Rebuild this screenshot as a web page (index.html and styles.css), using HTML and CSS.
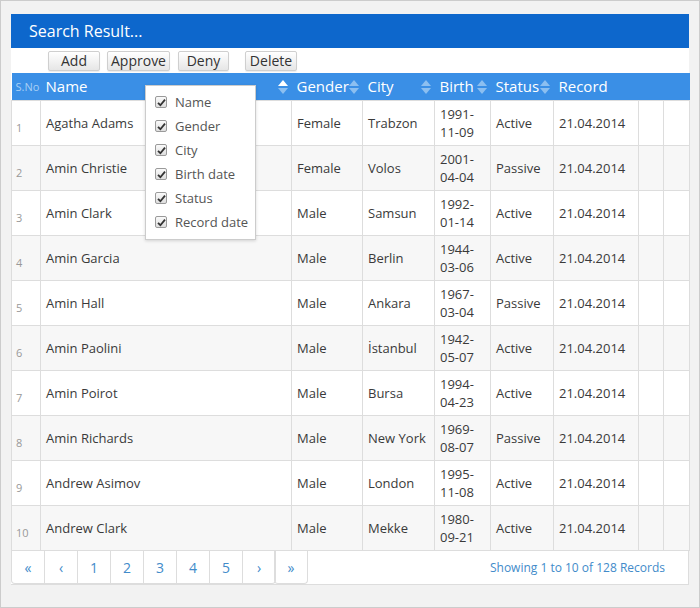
FILE: index.html
```html
<!DOCTYPE html>
<html>
<head>
<meta charset="utf-8">
<link rel="stylesheet" href="styles.css">
</head>
<body>
<div class="frame">
  <div class="panel">
    <div class="titlebar">Search Result...</div>
    <div class="toolbar">
      <button class="btn btn-add">Add</button>
      <button class="btn btn-approve">Approve</button>
      <button class="btn btn-deny">Deny</button>
      <button class="btn btn-delete">Delete</button>
    </div>
    <table class="grid">
      <colgroup>
        <col class="c-no"><col class="c-name"><col class="c-gender"><col class="c-city"><col class="c-birth"><col class="c-status"><col class="c-record"><col class="c-x1"><col class="c-x2">
      </colgroup>
      <thead>
        <tr>
          <th class="th-no"><div class="hcell">S.No</div></th>
          <th><div class="hcell"><span class="hlabel">Name</span><svg class="sort" width="10" height="14" viewBox="0 0 10 14"><polygon points="5,0 10,6 0,6" fill="#ffffff"/><polygon points="0,8 10,8 5,14" fill="#8cbff0"/></svg></div></th>
          <th><div class="hcell"><span class="hlabel">Gender</span><svg class="sort" width="10" height="14" viewBox="0 0 10 14"><polygon points="5,0 10,6 0,6" fill="#8cbff0"/><polygon points="0,8 10,8 5,14" fill="#8cbff0"/></svg></div></th>
          <th><div class="hcell"><span class="hlabel">City</span><svg class="sort" width="10" height="14" viewBox="0 0 10 14"><polygon points="5,0 10,6 0,6" fill="#8cbff0"/><polygon points="0,8 10,8 5,14" fill="#8cbff0"/></svg></div></th>
          <th><div class="hcell"><span class="hlabel">Birth date</span><svg class="sort" width="10" height="14" viewBox="0 0 10 14"><polygon points="5,0 10,6 0,6" fill="#8cbff0"/><polygon points="0,8 10,8 5,14" fill="#8cbff0"/></svg></div></th>
          <th><div class="hcell"><span class="hlabel">Status</span><svg class="sort" width="10" height="14" viewBox="0 0 10 14"><polygon points="5,0 10,6 0,6" fill="#8cbff0"/><polygon points="0,8 10,8 5,14" fill="#8cbff0"/></svg></div></th>
          <th><div class="hcell"><span class="hlabel">Record date</span></div></th>
          <th></th>
          <th></th>
        </tr>
      </thead>
      <tbody>
        <tr><td class="no">1</td><td>Agatha Adams</td><td>Female</td><td>Trabzon</td><td>1991-11-09</td><td>Active</td><td>21.04.2014</td><td></td><td></td></tr>
        <tr><td class="no">2</td><td>Amin Christie</td><td>Female</td><td>Volos</td><td>2001-04-04</td><td>Passive</td><td>21.04.2014</td><td></td><td></td></tr>
        <tr><td class="no">3</td><td>Amin Clark</td><td>Male</td><td>Samsun</td><td>1992-01-14</td><td>Active</td><td>21.04.2014</td><td></td><td></td></tr>
        <tr><td class="no">4</td><td>Amin Garcia</td><td>Male</td><td>Berlin</td><td>1944-03-06</td><td>Active</td><td>21.04.2014</td><td></td><td></td></tr>
        <tr><td class="no">5</td><td>Amin Hall</td><td>Male</td><td>Ankara</td><td>1967-03-04</td><td>Passive</td><td>21.04.2014</td><td></td><td></td></tr>
        <tr><td class="no">6</td><td>Amin Paolini</td><td>Male</td><td>İstanbul</td><td>1942-05-07</td><td>Active</td><td>21.04.2014</td><td></td><td></td></tr>
        <tr><td class="no">7</td><td>Amin Poirot</td><td>Male</td><td>Bursa</td><td>1994-04-23</td><td>Active</td><td>21.04.2014</td><td></td><td></td></tr>
        <tr><td class="no">8</td><td>Amin Richards</td><td>Male</td><td>New York</td><td>1969-08-07</td><td>Passive</td><td>21.04.2014</td><td></td><td></td></tr>
        <tr><td class="no">9</td><td>Andrew Asimov</td><td>Male</td><td>London</td><td>1995-11-08</td><td>Active</td><td>21.04.2014</td><td></td><td></td></tr>
        <tr><td class="no">10</td><td>Andrew Clark</td><td>Male</td><td>Mekke</td><td>1980-09-21</td><td>Active</td><td>21.04.2014</td><td></td><td></td></tr>
      </tbody>
    </table>
    <div class="footer">
      <div class="pager">
        <div class="pgroup">
          <span class="pitem">«</span><span class="pitem">‹</span><span class="pitem">1</span><span class="pitem">2</span><span class="pitem">3</span><span class="pitem">4</span><span class="pitem">5</span><span class="pitem">›</span>
        </div>
        <div class="pgroup">
          <span class="pitem">»</span>
        </div>
      </div>
      <div class="info">Showing 1 to 10 of 128 Records</div>
    </div>
    <div class="colmenu">
      <div class="mitem"><span class="cb"><svg width="9" height="9" viewBox="0 0 9 9"><path d="M1 4.8 L3.4 7.2 L8 1.6" fill="none" stroke="#333" stroke-width="1.8"/></svg></span>Name</div>
      <div class="mitem"><span class="cb"><svg width="9" height="9" viewBox="0 0 9 9"><path d="M1 4.8 L3.4 7.2 L8 1.6" fill="none" stroke="#333" stroke-width="1.8"/></svg></span>Gender</div>
      <div class="mitem"><span class="cb"><svg width="9" height="9" viewBox="0 0 9 9"><path d="M1 4.8 L3.4 7.2 L8 1.6" fill="none" stroke="#333" stroke-width="1.8"/></svg></span>City</div>
      <div class="mitem"><span class="cb"><svg width="9" height="9" viewBox="0 0 9 9"><path d="M1 4.8 L3.4 7.2 L8 1.6" fill="none" stroke="#333" stroke-width="1.8"/></svg></span>Birth date</div>
      <div class="mitem"><span class="cb"><svg width="9" height="9" viewBox="0 0 9 9"><path d="M1 4.8 L3.4 7.2 L8 1.6" fill="none" stroke="#333" stroke-width="1.8"/></svg></span>Status</div>
      <div class="mitem"><span class="cb"><svg width="9" height="9" viewBox="0 0 9 9"><path d="M1 4.8 L3.4 7.2 L8 1.6" fill="none" stroke="#333" stroke-width="1.8"/></svg></span>Record date</div>
    </div>
  </div>
</div>
</body>
</html>
```
FILE: styles.css
```css
* { box-sizing: border-box; }
html, body { margin: 0; padding: 0; }
body {
  font-family: "Open Sans", "Liberation Sans", sans-serif;
  color: #333;
}
.frame {
  width: 700px;
  height: 608px;
  border: 1px solid #cccccc;
  background: #f2f2f2;
  padding: 13px 10px 0 10px;
}
.panel {
  position: relative;
  width: 678px;
  background: #fff;
  border-bottom: 1px solid #dddddd;
}
.titlebar {
  height: 34px;
  background: #0d67cc;
  color: #fff;
  font-size: 16px;
  line-height: 34px;
  padding-left: 18px;
}
.toolbar {
  height: 25px;
  display: flex;
  align-items: flex-start;
  padding-top: 3px;
  padding-left: 37px;
}
.btn {
  font-family: "Open Sans", "Liberation Sans", sans-serif;
  font-size: 14px;
  color: #333;
  height: 20px;
  line-height: 18px;
  padding: 0;
  border: 1px solid #cfcfcf;
  border-radius: 2px;
  background: linear-gradient(#ffffff, #e6e6e6);
  box-shadow: 0 1px 1px rgba(0,0,0,0.08);
}
.btn-add { width: 52px; }
.btn-approve { width: 63px; margin-left: 7px; }
.btn-deny { width: 51px; margin-left: 8px; }
.btn-delete { width: 52px; margin-left: 16px; }

.grid {
  width: 678px;
  table-layout: fixed;
  border-collapse: collapse;
  font-size: 13px;
}
.c-no { width: 29px; }
.c-name { width: 251px; }
.c-gender { width: 71px; }
.c-city { width: 72px; }
.c-birth { width: 56px; }
.c-status { width: 63px; }
.c-record { width: 85px; }
.c-x1 { width: 25px; }
.c-x2 { width: 26px; }

.grid th {
  background: #3a8fe6;
  color: #fff;
  font-weight: normal;
  font-size: 15px;
  height: 27px;
  padding: 0;
  text-align: left;
  border: none;
  vertical-align: top;
}
.hcell {
  height: 27px;
  overflow: hidden;
  display: flex;
  align-items: flex-start;
  justify-content: space-between;
  padding: 2px 4px 0 5px;
  line-height: 22px;
}
.hlabel { white-space: normal; }
.th-no .hcell {
  font-size: 11px;
  color: #a9d0f5;
  padding: 3px 0 0 4px;
}
.sort { flex: none; margin-top: 5px; }

.grid td {
  border: 1px solid #dddddd;
  height: 45px;
  padding: 4px 5px;
  line-height: 18px;
  vertical-align: middle;
  color: #3a3a3a;
}
.grid tbody tr:nth-child(even) td { background: #f7f7f7; }
.grid td.no {
  font-size: 11px;
  color: #999;
  padding: 10px 0 0 4px;
}

.footer {
  height: 33px;
  display: flex;
  justify-content: space-between;
  align-items: center;
  border-right: 1px solid #dddddd;
}
.pager { display: flex; height: 33px; }
.pgroup { display: flex; }
.pgroup + .pgroup { margin-left: -1px; }
.pitem {
  width: 34px;
  height: 33px;
  display: flex;
  align-items: center;
  justify-content: center;
  font-size: 14px;
  color: #428bca;
  border: 1px solid #dddddd;
  border-top: none;
  margin-left: -1px;
}
.pgroup:first-child .pitem:first-child { margin-left: 0; }
.pitem:first-child { border-bottom-left-radius: 4px; }
.pitem:last-child { border-bottom-right-radius: 4px; }
.info {
  font-size: 12px;
  color: #428bca;
  padding-right: 23px;
}
.colmenu {
  position: absolute;
  left: 134px;
  top: 71px;
  width: 111px;
  height: 155px;
  background: #fff;
  border: 1px solid #cccccc;
  box-shadow: 0 1px 3px rgba(0,0,0,0.15);
  padding: 4px 0 0 9px;
}
.mitem {
  height: 24px;
  display: flex;
  align-items: center;
  font-size: 13px;
  color: #555;
}
.cb {
  width: 12px;
  height: 12px;
  border: 1px solid #9a9a9a;
  border-radius: 2px;
  background: linear-gradient(#fafafa, #dedede);
  display: flex;
  align-items: center;
  justify-content: center;
  margin-right: 8px;
}
```
